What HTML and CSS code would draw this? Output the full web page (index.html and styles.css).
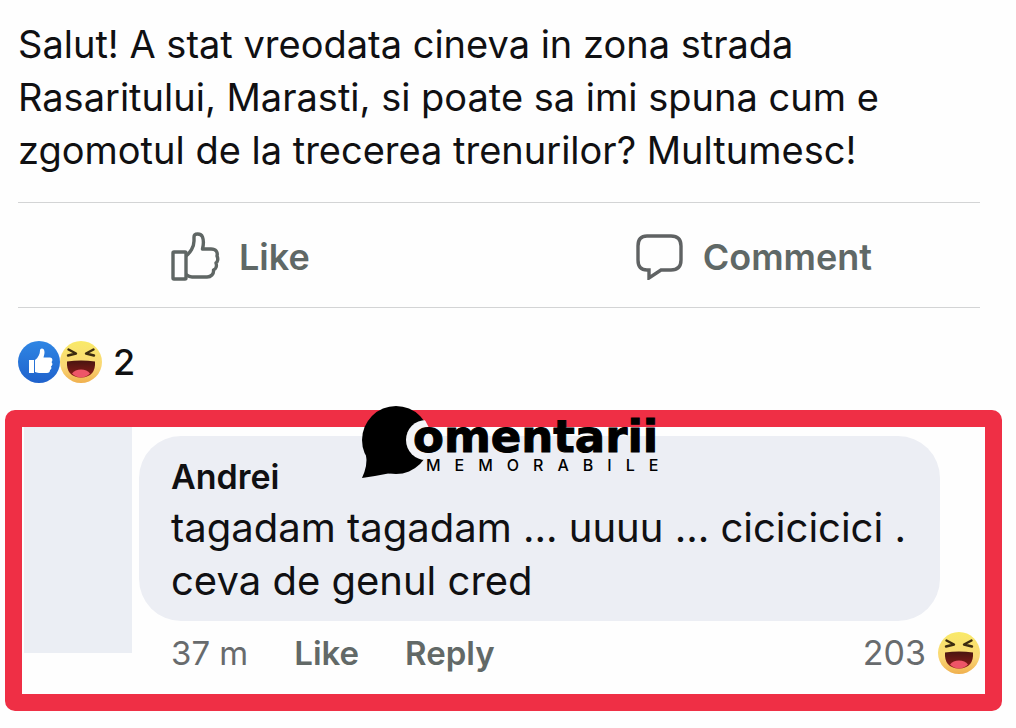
FILE: index.html
```html
<!DOCTYPE html>
<html lang="ro">
<head>
<meta charset="utf-8">
<meta name="viewport" content="width=device-width, initial-scale=1">
<title>Comentarii Memorabile</title>
<link rel="stylesheet" href="styles.css">
</head>
<body>
<svg class="defs" aria-hidden="true">
  <defs>
    <linearGradient id="blue" x1="0" y1="0" x2="0" y2="1"><stop offset="0" stop-color="#2f86e4"/><stop offset="1" stop-color="#1f62cc"/></linearGradient>
    <linearGradient id="yellow" x1="0" y1="0" x2="0" y2="1"><stop offset="0" stop-color="#f9ea68"/><stop offset=".6" stop-color="#fad775"/><stop offset="1" stop-color="#f0b04e"/></linearGradient>
    <linearGradient id="mouth" x1="0" y1="0" x2="0" y2="1"><stop offset="0" stop-color="#4a1510"/><stop offset="1" stop-color="#8e1b1a"/></linearGradient>
    <symbol id="haha" viewBox="0 0 42 42">
      <circle cx="21" cy="21" r="21" fill="url(#yellow)"/>
      <path d="M7 20.500Q21 18.500 35 20.500Q36 36 21 36.500Q6 36 7 20.500Z" fill="url(#mouth)"/>
      <path d="M12 32.500Q15 28.500 21 28.500Q27 28.500 30 32.500Q26 36.500 21 36.500Q16 36.500 12 32.500Z" fill="#ee5568"/>
      <path d="M8.500 8.500L16 12.500L8 14.500M33.500 8.500L26 12.500L34 14.500" fill="none" stroke="#3c2b10" stroke-width="2.400" stroke-linecap="round" stroke-linejoin="round"/>
    </symbol>
  </defs>
</svg>
<main class="post">
  <p class="post-text">Salut! A stat vreodata cineva in zona strada<br>Rasaritului, Marasti, si poate sa imi spuna cum e<br>zgomotul de la trecerea trenurilor? Multumesc!</p>
  <div class="actions">
    <button class="action" type="button">
      <svg width="50" height="50" viewBox="0 0 50 50" fill="none" stroke="#5f6664" stroke-width="3.400" stroke-linejoin="round" aria-hidden="true">
        <rect x="3" y="20" width="13" height="27" rx="1"/>
        <path d="M16 24C20 21 24 15 24 9V5C24 1 31 1 32.500 5C34 9 33.500 13 32.500 17H41C46 17 48 20 47 24C48.500 27 47.500 30 46 31C47 34 46 37 43.500 38C44 42 41 45 37 45H22C18 45 17 43 16 42.500"/>
      </svg>
      Like
    </button>
    <button class="action" type="button">
      <svg width="48" height="46" viewBox="0 0 48 46" fill="none" stroke="#5f6263" stroke-width="3.400" aria-hidden="true">
        <path d="M11 2H35Q45 2 45 12V26Q45 36 35 36H25L13 44V36H11Q2 36 2 26V12Q2 2 11 2Z"/>
      </svg>
      Comment
    </button>
  </div>
  <div class="reactions">
    <svg width="42" height="42" viewBox="0 0 42 42" aria-hidden="true">
      <circle cx="21" cy="21" r="21" fill="url(#blue)"/>
      <path d="M11 19H16V32H11Z" fill="#fff"/>
      <path d="M17 19C20 17 22 13 22 9.500C22 6.500 26.500 6.500 26.500 11C26.500 13 26 14.500 25.500 16.500H32C34.500 16.500 35 19.500 33.500 21C35 22.500 34.500 24.500 33 25.500C34 27.500 33 28.500 32 29C32 31 31 32 29 32H21C19 32 18 31 17 31Z" fill="#fff"/>
    </svg>
    <svg width="42" height="42" aria-hidden="true"><use href="#haha"/></svg>
    <span class="reaction-total">2</span>
  </div>
</main>
<section class="frame">
  <div class="brand">
    <svg class="brand-mark" width="72" height="76" viewBox="0 0 72 76" aria-hidden="true">
      <clipPath id="disc"><circle cx="35" cy="35" r="35"/></clipPath>
      <circle cx="35" cy="35" r="34"/>
      <path d="M5 50Q7 60 1 73Q15 71 30 68Z"/>
      <circle cx="65" cy="35" r="20" fill="#f3f4f8" clip-path="url(#disc)"/>
    </svg>
    <div class="brand-words">
      <span class="brand-name">omentarii</span>
      <span class="brand-sub">MEMORABILE</span>
    </div>
  </div>
  <div class="avatar"></div>
  <article class="comment">
    <div class="bubble">
      <h2 class="author">Andrei</h2>
      <p class="comment-text">tagadam tagadam ... uuuu ... cicicicici .<br>ceva de genul cred</p>
    </div>
    <div class="meta">
      <span>37 m</span>
      <button class="link" type="button">Like</button>
      <button class="link" type="button">Reply</button>
      <span class="count">203</span>
      <svg width="42" height="42" aria-hidden="true"><use href="#haha"/></svg>
    </div>
  </article>
</section>
</body>
</html>
```
FILE: styles.css
```css
* { box-sizing: border-box; }
body {
  margin: 0;
  background: #fefefe;
  color: #101012;
  font-family: Inter, "Liberation Sans", sans-serif;
}
svg { display: block; flex: none; }
.defs { position: absolute; width: 0; height: 0; }
button {
  border: 0;
  padding: 0;
  background: none;
  font: inherit;
  color: inherit;
}
.post { padding: 18px 36px 0 18px; }
.post-text {
  margin: 0 0 25px;
  font-size: 38px;
  line-height: 53px;
  white-space: nowrap;
}
.actions {
  display: flex;
  justify-content: space-between;
  align-items: center;
  height: 106px;
  padding: 3px 108px 0 152px;
  border-top: 1px solid #d3d4d5;
  border-bottom: 1px solid #d3d4d5;
}
.action {
  display: flex;
  align-items: center;
  gap: 19px;
  color: #5f6866;
  font-size: 36px;
  font-weight: 600;
}
.reactions {
  display: flex;
  align-items: center;
  padding: 33px 0 27px;
}
.reaction-total {
  margin-left: 11px;
  font-size: 36px;
  line-height: 42px;
  font-weight: 500;
}
.frame {
  position: relative;
  display: flex;
  gap: 7px;
  margin: 0 14px 16px 5px;
  border: 17px solid #ef2f45;
  border-radius: 10px;
  background: #fefefe;
}
.avatar {
  width: 108px;
  margin: 0 0 41px 2px;
  background: #ebeef4;
}
.comment { flex: 1; padding: 9px 5px 20px 0; }
.bubble {
  margin-right: 40px;
  padding: 17px 32px 14px;
  border-radius: 42px;
  background: #eceef4;
}
.author {
  margin: 0;
  font-size: 34px;
  line-height: 48px;
  font-weight: 600;
}
.comment-text {
  margin: 0;
  font-size: 40px;
  line-height: 53px;
  white-space: nowrap;
}
.meta {
  display: flex;
  align-items: center;
  gap: 46px;
  padding: 11px 0 0 32px;
  color: #686b6d;
  font-size: 33px;
  line-height: 42px;
}
.link { color: #626967; font-weight: 600; }
.count { margin: 0 -34px 0 auto; font-size: 34px; }
.brand {
  position: absolute;
  top: -22px;
  left: 339px;
  display: flex;
  color: #000;
}
.brand-words {
  display: flex;
  flex-direction: column;
  margin: 11px 0 0 -20px;
  white-space: nowrap;
}
.brand-name {
  font-family: "DejaVu Sans", sans-serif;
  font-size: 45px;
  line-height: 42px;
  font-weight: 700;
  -webkit-text-stroke: 1px #000;
}
.brand-sub {
  margin-top: -1px;
  padding-left: 13px;
  font-size: 16px;
  line-height: 16px;
  font-weight: 500;
  letter-spacing: 14px;
}
```
